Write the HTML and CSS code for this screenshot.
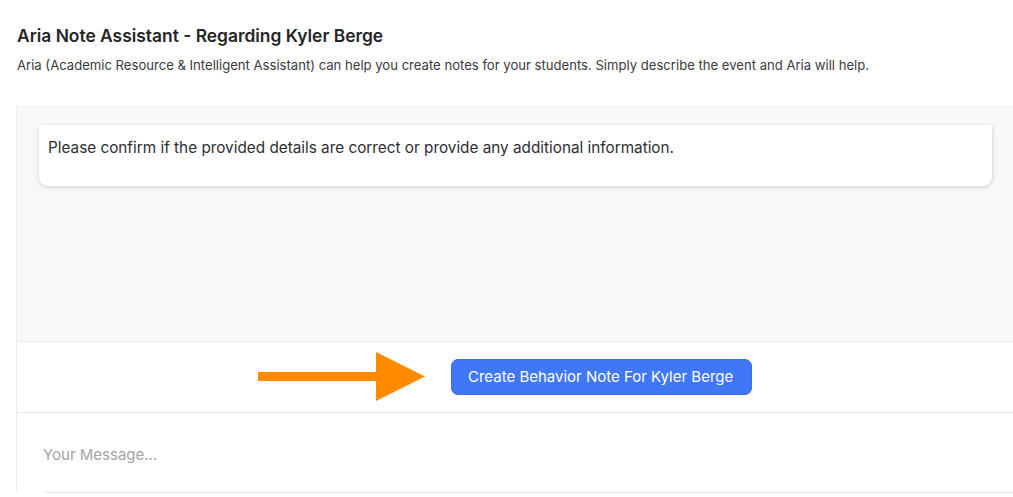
FILE: index.html
```html
<!DOCTYPE html>
<html lang="en">
<head>
<meta charset="utf-8">
<title>Aria Note Assistant</title>
<link rel="stylesheet" href="styles.css">
</head>
<body>
<div class="page">
  <header class="head">
    <h1 class="title">Aria Note Assistant - Regarding Kyler Berge</h1>
    <p class="subtitle">Aria (Academic Resource &amp; Intelligent Assistant) can help you create notes for your students. Simply describe the event and Aria will help.</p>
  </header>
  <section class="chat">
    <div class="messages">
      <div class="card">
        <p class="card-text">Please confirm if the provided details are correct or provide any additional information.</p>
      </div>
    </div>
    <div class="action-row">
      <svg class="arrow" width="168" height="50" viewBox="0 0 168 50" aria-hidden="true">
        <rect x="0" y="20" width="120" height="9" fill="#ff8a00"/>
        <polygon points="118,0 167,24.5 118,49" fill="#ff8a00"/>
      </svg>
      <button class="create-btn" type="button">Create Behavior Note For Kyler Berge</button>
    </div>
    <div class="composer">
      <div class="input">Your Message...</div>
    </div>
  </section>
</div>
</body>
</html>
```

FILE: styles.css
```css
* { box-sizing: border-box; }
html, body { margin: 0; padding: 0; background: #ffffff; }
body {
  font-family: "Inter", "Noto Sans", Arial, sans-serif;
  color: #2b2b2e;
  overflow: hidden;
}
.page {
  padding-left: 16px;
  height: 497px;
  overflow: hidden;
}
.head {
  padding: 25px 0 0 1px;
  height: 106px;
}
.title {
  margin: 0;
  font-size: 17.4px;
  line-height: 21px;
  font-weight: 600;
  color: #252528;
}
.subtitle {
  margin: 10px 0 0;
  font-size: 13.1px;
  line-height: 18px;
  color: #3a3a3e;
}
.chat {
  border-left: 1px solid #ececec;
}
.messages {
  height: 235px;
  background: #f8f8f8;
  border-top: 1px solid #eeeeee;
  padding: 18px 21px 0 22px;
}
.card {
  background: #ffffff;
  border-radius: 0 0 9px 9px;
  box-shadow: 0 2px 5px rgba(0, 0, 0, 0.12), 1px 0 3px rgba(0, 0, 0, 0.05);
  padding: 12px 9px 0;
  height: 61px;
}
.card-text {
  margin: 0;
  font-size: 15.3px;
  line-height: 22px;
  color: #2e2e32;
}
.action-row {
  height: 72px;
  border-top: 1px solid #ececec;
  border-bottom: 1px solid #ececec;
  display: flex;
  align-items: center;
  gap: 25px;
  padding-left: 241px;
}
.arrow { display: block; flex: none; }
.create-btn {
  font-family: "Inter", "Liberation Sans", Arial, sans-serif;
  font-size: 15px;
  color: #ffffff;
  background: #4077f7;
  border: 1px solid #3a6ff0;
  border-radius: 7px;
  height: 36px;
  padding: 0 18px 0 16px;
  line-height: 34px;
}
.composer {
  padding: 31px 0 0 26px;
}
.input {
  font-size: 15px;
  line-height: 22px;
  color: #a3a3a8;
  padding-bottom: 26px;
  border-bottom: 1px solid #ececec;
}
```
